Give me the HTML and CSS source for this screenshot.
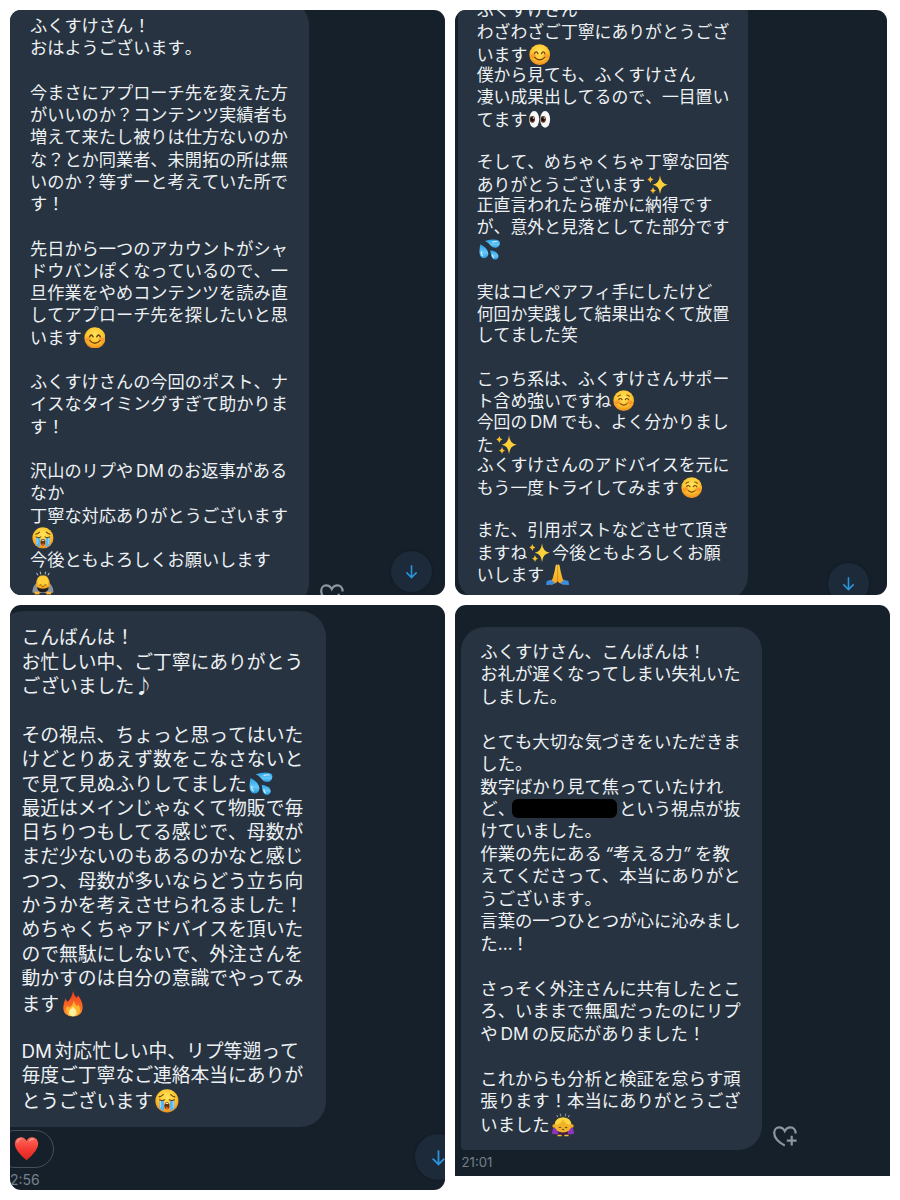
FILE: index.html
```html
<!DOCTYPE html>
<html lang="ja">
<head>
<meta charset="utf-8">
<title>DM</title>
<link rel="stylesheet" href="styles.css">
</head>
<body>
<svg class="defs" width="0" height="0" aria-hidden="true">
  <defs>
    <radialGradient id="gFace" cx=".5" cy=".35" r=".65"><stop offset="0" stop-color="#ffe55c"/><stop offset=".6" stop-color="#fdc52f"/><stop offset="1" stop-color="#ee8a1c"/></radialGradient>
    <linearGradient id="gDrop" x1="0" y1="0" x2="0" y2="1"><stop offset="0" stop-color="#2a9fe6"/><stop offset=".6" stop-color="#65c8f7"/><stop offset="1" stop-color="#2495dc"/></linearGradient>
    <linearGradient id="gFire" x1="0" y1="0" x2="0" y2="1"><stop offset="0" stop-color="#ee3b22"/><stop offset=".6" stop-color="#fb6a24"/><stop offset="1" stop-color="#ff9b2c"/></linearGradient>
    <linearGradient id="gHeart" x1="0" y1="0" x2="0" y2="1"><stop offset="0" stop-color="#ff6a5c"/><stop offset=".5" stop-color="#f53d35"/><stop offset="1" stop-color="#dc2320"/></linearGradient>
    <linearGradient id="gHand" x1="0" y1="0" x2="0" y2="1"><stop offset="0" stop-color="#ffd23e"/><stop offset="1" stop-color="#f2a021"/></linearGradient>
    <symbol id="smile" viewBox="0 0 32 32">
      <circle cx="16" cy="16" r="15.5" fill="url(#gFace)"/>
      <ellipse cx="6.5" cy="18" rx="4" ry="3" fill="#f5762a" opacity=".5"/><ellipse cx="25.500" cy="18" rx="4" ry="3" fill="#f5762a" opacity=".5"/>
      <path d="M8 14.500q2.700-5.500 5.400 0M18.600 14.500q2.700-5.500 5.400 0M8.500 20q7.500 7.500 15 0" fill="none" stroke="#6d3c0c" stroke-width="1.900" stroke-linecap="round"/>
    </symbol>
    <symbol id="relaxed" viewBox="0 0 32 32">
      <circle cx="16" cy="16" r="15.500" fill="url(#gFace)"/>
      <ellipse cx="7" cy="18.500" rx="4" ry="3" fill="#f5762a" opacity=".55"/><ellipse cx="25" cy="18.500" rx="4" ry="3" fill="#f5762a" opacity=".55"/>
      <path d="M8.500 14.500q2.500-3.500 5 0M18.500 14.500q2.500-3.500 5 0M11 20.500q5 4.500 10 0M7.500 9.500q2-2 4-2M20.500 7.500q2.500 0 4 2" fill="none" stroke="#7c430c" stroke-width="1.700" stroke-linecap="round"/>
    </symbol>
    <symbol id="cry" viewBox="0 0 32 32">
      <circle cx="16" cy="16" r="15.500" fill="url(#gFace)"/>
      <path d="M6 15h6v14.500q-4-1.500-6-4zM20 15h6v10.500q-2 3-6 4z" fill="#59b5ef"/>
      <path d="M7.500 16v9M24.500 16v9" stroke="#a4dcfa" stroke-width="1.300"/>
      <path d="M6 14.500q3.500 2 7 0M19 14.500q3.500 2 7 0M5.500 10.500q3-.5 5.500-3M21 7.500q2.500 2.500 5.500 3" fill="none" stroke="#6b4010" stroke-width="1.600" stroke-linecap="round"/>
      <ellipse cx="16" cy="22.500" rx="3.500" ry="4.800" fill="#6a3512"/><path d="M13.500 20q2.500-2.500 5 0z" fill="#fff"/><ellipse cx="16" cy="25.500" rx="2.200" ry="1.500" fill="#e5593e"/>
    </symbol>
    <symbol id="bowman" viewBox="0 0 32 34">
      <path d="M7 3l1.500 2.500M12 1l.8 3M20 1l-.8 3M25 3l-1.500 2.500" stroke="#b3bbc1" stroke-width="1.500" stroke-linecap="round"/>
      <path d="M7 17q-6 5-6.500 13 0 2 3 2h25q3 0 3-2Q31 22 25 17z" fill="#8c9299"/>
      <path d="M6 20q0-14 10-14t10 14l-2 6q-8 7-16 0z" fill="#f3ad21"/>
      <path d="M8 15q0-8 8-8t8 8l-1 5H9z" fill="#ffd03a"/>
      <path d="M7.500 23q3.500 2.500 8.500 2.500t8.500-2.500q0 8-8.500 8t-8.500-8z" fill="#211d20"/>
      <path d="M11 20h3M18 20h3M14.500 22.500h3" stroke="#875010" stroke-width="1.400"/>
      <path d="M4 30h7v4H4zM21 30h7v4h-7z" fill="#f4b52c"/>
    </symbol>
    <symbol id="bowwoman" viewBox="0 0 32 34">
      <path d="M7 3l1.500 2.500M12 1l.8 3M20 1l-.8 3M25 3l-1.500 2.500" stroke="#9da6ad" stroke-width="1.300" stroke-linecap="round"/>
      <path d="M4 19q-5 5-3.500 11 4 1 9 0h13q5 1 9 0Q33 24 28 19z" fill="#8f35bb"/>
      <path d="M9 29q0-6 7-6t7 6l-2 3H11z" fill="#421d43"/>
      <circle cx="3" cy="18.500" r="2.500" fill="#edaa21"/><circle cx="29" cy="18.500" r="2.500" fill="#edaa21"/>
      <ellipse cx="16" cy="17" rx="12.500" ry="11" fill="#f1b329"/>
      <path d="M4 16Q5 6 16 6t12 10q-7 2-12-7-5 9-12 7z" fill="#ffd63d"/>
      <path d="M10 20q1.500 1.500 3 0M19 20q1.500 1.500 3 0M14.500 23.500h3" fill="none" stroke="#774411" stroke-width="1.500"/>
      <path d="M8 31h6v2.500H8zM18 31h6v2.500h-6z" fill="#f8bd35"/>
    </symbol>
    <symbol id="eyes" viewBox="0 0 32 32">
      <ellipse cx="7.800" cy="15.500" rx="7.500" ry="12.500" fill="#f8f8f8"/><ellipse cx="24.200" cy="15.500" rx="7.500" ry="12.500" fill="#f8f8f8"/>
      <ellipse cx="5" cy="15.500" rx="4" ry="5" fill="#5c321a"/><ellipse cx="21.300" cy="15.500" rx="4" ry="5" fill="#5c321a"/>
      <ellipse cx="4.800" cy="15.500" rx="2.300" ry="3" fill="#130d0b"/><ellipse cx="21" cy="15.500" rx="2.300" ry="3" fill="#130d0b"/>
      <circle cx="6.500" cy="13.500" r="1" fill="#fff"/><circle cx="22.800" cy="13.500" r="1" fill="#fff"/>
    </symbol>
    <symbol id="sparkles" viewBox="0 0 32 32">
      <path d="M19.500 2Q20.500 14.500 31 16 20.500 17.500 19.500 30 18.500 17.500 8.500 16 18.500 14.500 19.500 2z" fill="#fdcf39"/>
      <path d="M5 3q.7 4.600 4.500 5.200Q5.700 9 5 13.500 4.300 9 .5 8.200 4.300 7.600 5 3zM9 19q.8 5 5 5.800-4.200.7-5 5.700-.8-5-5-5.700 4.200-.8 5-5.800z" fill="#f7bd2e"/>
    </symbol>
    <symbol id="drops" viewBox="0 0 32 32">
      <path d="M9 3Q20-.5 28 1.500q4.500 1.800 3 6.500-1.500 5-6.500 5.500-5 0-7.500-4Q15 5.500 9 3z" fill="url(#gDrop)"/>
      <path d="M2 8q8 4 11 10 2.500 6-1.500 9.500-4.500 3-8.500-.5Q-1 23 2 8z" fill="url(#gDrop)"/>
      <path d="M17 17q8 1 11 5.500 2.500 4-.5 7-3 2.500-6.500.3Q18 27.500 17 17z" fill="url(#gDrop)"/>
      <path d="M4 19q-1 5 2 6.500M20 23.500q0 3 2 4.500M20 4.500q5-1.500 7-.5" fill="none" stroke="#d6f3ff" stroke-width="1.500" stroke-linecap="round"/>
    </symbol>
    <symbol id="fire" viewBox="0 0 32 36">
      <path d="M16 0q1 5 5 9.500 1.500-1 2-3.500 7 9 6.500 18Q28.500 35 16 35.500 3 35 2.500 23.500 2.500 17 6 10q.5 3 2.500 5Q15 9 16 0z" fill="url(#gFire)"/>
      <path d="M17 13q1 5 4.500 8 1-.5 1.500-2.500 4 5 2.500 10-2 6.500-9.500 6.500-8 0-9.500-7.500Q6 24 8 20q1 2 3 3 6-3.500 6-10z" fill="#ffb42d"/>
      <path d="M16 22q5 4 5 8 0 4.500-5 5-6-.5-5.500-5Q11 26 16 22z" fill="#fff0a0"/>
    </symbol>
    <symbol id="pray" viewBox="0 0 34 32">
      <path d="M14.500 1Q16 0 17 1.500 18 0 19.500 1q1 3 2 10l3 11q1.500 3 5 5l-3.500 4-7-3q-2-1-2-4 0 3-2 4l-7 3L4.500 27q3.500-2 5-5l3-11q1-7 2-10z" fill="url(#gHand)"/>
      <path d="M17 2v22" stroke="#c87915" stroke-width="1"/>
      <path d="M7 23.500l6 5q-3 3-13 3 0-4 1-6zM27 23.500l-6 5q3 3 13 3 0-4-1-6z" fill="#3c8de0"/>
    </symbol>
    <symbol id="heart" viewBox="0 0 32 32">
      <path d="M16 31Q1 19 1 10 1.500 2 9 1.500q5 0 7 5 2-5 7-5Q30.500 2 31 10q0 9-15 21z" fill="url(#gHeart)"/>
      <path d="M4 8q1-4 5-4.500M20 6q2-2.500 5-2" stroke="#ffa99e" stroke-width="1.500" fill="none" stroke-linecap="round"/>
    </symbol>
    <symbol id="arrow" viewBox="0 0 16 16">
      <path d="M8 1.200v13M2.500 9l5.500 5.500L13.500 9" fill="none" stroke="#2b93dc" stroke-width="1.700"/>
    </symbol>
    <symbol id="addheart" viewBox="0 0 24 21">
      <path d="M11.800 19.600C5.500 16.300 1.200 11.700 1.200 6.800c0-3.200 2.200-5.400 5-5.400 2.500 0 4.300 1.300 5.600 3.700 1.300-2.400 3.100-3.700 5.600-3.700 3 0 5.200 2.300 5.200 6M18.700 9.700v9.800M13.800 14.600h9.800" fill="none" stroke="#8b97a3" stroke-width="2.200"/>
    </symbol>
  </defs>
</svg>

<main class="board">
  <div class="column">
    <section class="panel panel-a">
      <div class="bubble">
        <p>ふくすけさん！</p>
        <p>おはようございます。</p>
        <p></p>
        <p>今まさにアプローチ先を変えた方</p>
        <p>がいいのか？コンテンツ実績者も</p>
        <p>増えて来たし被りは仕方ないのか</p>
        <p>な？とか同業者、未開拓の所は無</p>
        <p>いのか？等ずーと考えていた所で</p>
        <p>す！</p>
        <p></p>
        <p>先日から一つのアカウントがシャ</p>
        <p>ドウバンぽくなっているので、一</p>
        <p>旦作業をやめコンテンツを読み直</p>
        <p>してアプローチ先を探したいと思</p>
        <p>います<svg class="emoji"><use href="#smile"/></svg></p>
        <p></p>
        <p>ふくすけさんの今回のポスト、ナ</p>
        <p>イスなタイミングすぎて助かりま</p>
        <p>す！</p>
        <p></p>
        <p>沢山のリプや<span class="latin">DM</span>のお返事がある</p>
        <p>なか</p>
        <p>丁寧な対応ありがとうございます</p>
        <p><svg class="emoji"><use href="#cry"/></svg></p>
        <p>今後ともよろしくお願いします</p>
        <p><svg class="emoji tall"><use href="#bowman"/></svg></p>
      </div>
      <svg class="add-heart"><use href="#addheart"/></svg>
      <span class="jump"><svg><use href="#arrow"/></svg></span>
    </section>

    <section class="panel panel-c">
      <div class="bubble">
        <p>こんばんは！</p>
        <p>お忙しい中、ご丁寧にありがとう</p>
        <p>ございました♪</p>
        <p></p>
        <p>その視点、ちょっと思ってはいた</p>
        <p>けどとりあえず数をこなさないと</p>
        <p>で見て見ぬふりしてました<svg class="emoji"><use href="#drops"/></svg></p>
        <p>最近はメインじゃなくて物販で毎</p>
        <p>日ちりつもしてる感じで、母数が</p>
        <p>まだ少ないのもあるのかなと感じ</p>
        <p>つつ、母数が多いならどう立ち向</p>
        <p>かうかを考えさせられるました！</p>
        <p>めちゃくちゃアドバイスを頂いた</p>
        <p>ので無駄にしないで、外注さんを</p>
        <p>動かすのは自分の意識でやってみ</p>
        <p>ます<svg class="emoji tall"><use href="#fire"/></svg></p>
        <p></p>
        <p><span class="latin start">DM</span>対応忙しい中、リプ等遡って</p>
        <p>毎度ご丁寧なご連絡本当にありが</p>
        <p>とうございます<svg class="emoji"><use href="#cry"/></svg></p>
      </div>
      <div class="reaction"><svg><use href="#heart"/></svg></div>
      <time>2:56</time>
      <span class="jump"><svg><use href="#arrow"/></svg></span>
    </section>
  </div>

  <div class="column">
    <section class="panel panel-b">
      <div class="bubble">
        <p>ふくすけさん</p>
        <p>わざわざご丁寧にありがとうござ</p>
        <p>います<svg class="emoji"><use href="#smile"/></svg></p>
        <p>僕から見ても、ふくすけさん</p>
        <p>凄い成果出してるので、一目置い</p>
        <p>てます<svg class="emoji"><use href="#eyes"/></svg></p>
        <p></p>
        <p>そして、めちゃくちゃ丁寧な回答</p>
        <p>ありがとうございます<svg class="emoji"><use href="#sparkles"/></svg></p>
        <p>正直言われたら確かに納得です</p>
        <p>が、意外と見落としてた部分です</p>
        <p><svg class="emoji"><use href="#drops"/></svg></p>
        <p></p>
        <p>実はコピペアフィ手にしたけど</p>
        <p>何回か実践して結果出なくて放置</p>
        <p>してました笑</p>
        <p></p>
        <p>こっち系は、ふくすけさんサポー</p>
        <p>ト含め強いですね<svg class="emoji"><use href="#relaxed"/></svg></p>
        <p>今回の<span class="latin">DM</span>でも、よく分かりまし</p>
        <p>た<svg class="emoji"><use href="#sparkles"/></svg></p>
        <p>ふくすけさんのアドバイスを元に</p>
        <p>もう一度トライしてみます<svg class="emoji"><use href="#relaxed"/></svg></p>
        <p></p>
        <p>また、引用ポストなどさせて頂き</p>
        <p>ますね<svg class="emoji"><use href="#sparkles"/></svg>今後ともよろしくお願</p>
        <p>いします<svg class="emoji wide"><use href="#pray"/></svg></p>
      </div>
      <span class="jump"><svg><use href="#arrow"/></svg></span>
    </section>

    <section class="panel panel-d">
      <div class="bubble">
        <p>ふくすけさん、こんばんは！</p>
        <p>お礼が遅くなってしまい失礼いた</p>
        <p>しました。</p>
        <p></p>
        <p>とても大切な気づきをいただきま</p>
        <p>した。</p>
        <p>数字ばかり見て焦っていたけれ</p>
        <p>ど、<span class="redacted"></span>という視点が抜</p>
        <p>けていました。</p>
        <p>作業の先にある<span class="quote open">“</span>考える力<span class="quote close">”</span>を教</p>
        <p>えてくださって、本当にありがと</p>
        <p>うございます。</p>
        <p>言葉の一つひとつが心に沁みまし</p>
        <p>た<span class="dots">…</span>！</p>
        <p></p>
        <p>さっそく外注さんに共有したとこ</p>
        <p>ろ、いままで無風だったのにリプ</p>
        <p>や<span class="latin">DM</span>の反応がありました！</p>
        <p></p>
        <p>これからも分析と検証を怠らす頑</p>
        <p>張ります！本当にありがとうござ</p>
        <p>いました<svg class="emoji tall"><use href="#bowwoman"/></svg></p>
      </div>
      <svg class="add-heart"><use href="#addheart"/></svg>
      <time>21:01</time>
    </section>
  </div>
</main>
</body>
</html>
```
FILE: styles.css
```css
* { box-sizing: border-box; }

body {
  margin: 0;
  background: #fff;
  color: #edf1f4;
  font-family: Inter, "Noto Sans CJK JP", sans-serif;
}

.defs { position: absolute; }

.board {
  display: flex;
  gap: 10px;
  height: 1200px;
  padding: 10px;
  overflow: hidden;
}

.column {
  display: flex;
  flex-direction: column;
  gap: 10px;
  width: 435px;
}

.panel {
  position: relative;
  flex: none;
  overflow: hidden;
  border-radius: 11px;
  background: #16202a;
}

.bubble {
  background: #273340;
  border-radius: 24px;
  font-size: var(--em);
  line-height: var(--line);
}

.bubble p {
  height: var(--line);
  margin: 0;
  white-space: nowrap;
  font-kerning: none;
}

/* Inline pieces of a message */
.emoji {
  width: 1.27em;
  height: 1.27em;
  margin: 0 .1em 0 .12em;
  vertical-align: -.28em;
}
.emoji.tall { height: 1.38em; vertical-align: -.32em; }
.emoji.wide { width: 1.38em; }

.latin, .quote, .dots {
  display: inline-block;
  line-height: 0;
  text-align: center;
}
.latin { width: 1.96em; }
.latin.start { width: 1.76em; text-align: left; }
.quote.open { width: .65em; text-align: right; font-style: italic; }
.quote.close { width: .72em; text-align: left; font-style: italic; }
.dots { width: .8em; }

.redacted {
  display: inline-block;
  width: 105px;
  height: 19.500px;
  margin: 0 2.500px 0 -3.500px;
  border-radius: 6px;
  background: #000;
  vertical-align: -3.500px;
}

/* Controls floating over the conversation */
.jump {
  position: absolute;
  display: grid;
  place-items: center;
  width: 41px;
  height: 41px;
  border-radius: 50%;
  background: #1c2a39;
  box-shadow: 0 0 3px rgba(8, 14, 20, .35);
}
.jump svg { width: 15px; height: 15px; }

.add-heart {
  position: absolute;
  width: 24px;
  height: 21px;
}

time {
  display: block;
  color: #74808b;
  font-size: 13.200px;
  line-height: 16px;
}

/* Upper left */
.panel-a { --em: 17.200px; --line: 22.250px; height: 585px; }
.panel-a .bubble { width: 299px; height: 606px; margin-top: -9px; padding: 14px 0 0 20px; border-radius: 0 24px 24px 0; }
.panel-a .jump { left: 381px; top: 541px; }
.panel-a .add-heart { left: 310px; top: 574px; }

/* Upper right */
.panel-b { --em: 16.830px; --line: 21.680px; width: 432px; height: 585px; }
.panel-b .bubble { width: 290px; height: 610px; margin: -20px 0 0 3px; padding: 10.300px 0 0 18.800px; }
.panel-b .jump { left: 373px; top: 553px; }

/* Lower left */
.panel-c { --em: 18.800px; --line: 24.340px; height: 585px; }
.panel-c .bubble { width: 327px; height: 516px; margin: 6px 0 0 -11px; padding: 15.400px 0 0 22.500px; border-radius: 24px 26px 26px 0; }
.panel-c .reaction {
  display: flex;
  align-items: center;
  justify-content: flex-end;
  width: 58px;
  height: 38px;
  margin: 3px 0 0 -14px;
  padding-right: 14px;
  border: 1px solid #44505c;
  border-radius: 19px;
}
.panel-c .reaction svg { width: 25px; height: 25px; margin-top: -2px; }
.panel-c time { margin: 4px 0 0; font-size: 14px; }
.panel-c .jump { left: 405px; top: 529px; width: 46px; height: 46px; }
.panel-c .jump svg { width: 17px; height: 17px; }

/* Lower right */
.panel-d { --em: 17.380px; --line: 22.480px; height: 571px; border-radius: 11px 11px 0 0; }
.panel-d .bubble { width: 301px; height: 523px; margin: 21.500px 0 0 6px; padding: 14.200px 0 0 19.300px; border-radius: 24px 24px 24px 4px; }
.panel-d .add-heart { left: 318px; top: 520.500px; }
.panel-d time { margin: 4px 0 0 6.500px; }
```
